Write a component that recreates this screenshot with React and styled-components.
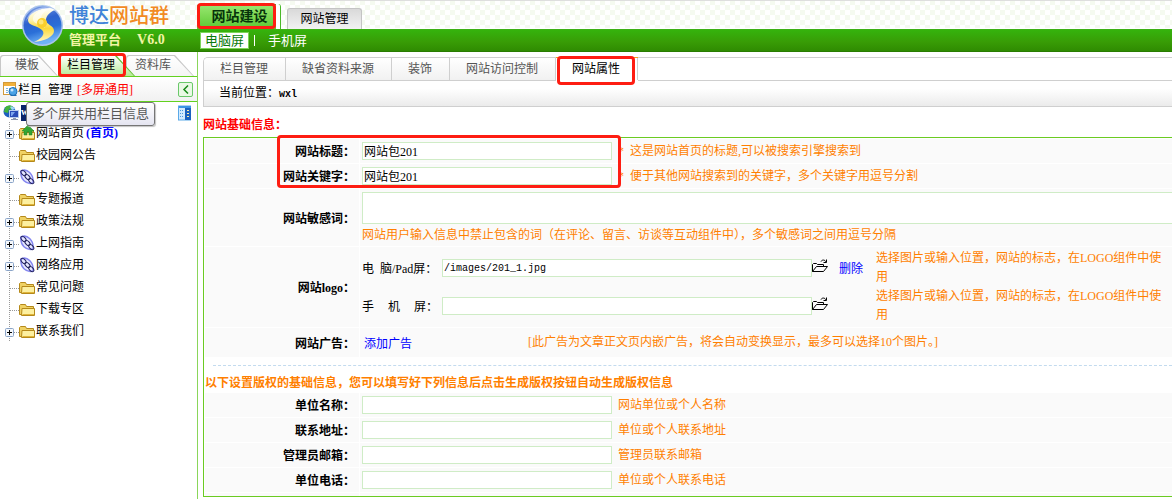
import React, { useState } from "react";
import styled, { createGlobalStyle, css } from "styled-components";

const GlobalStyle = createGlobalStyle`
  * {
    box-sizing: border-box;
  }
  body {
    margin: 0;
    background: #fff;
    overflow: hidden;
  }
  body, input, textarea, button {
    font-family: "Liberation Serif", "Noto Sans CJK SC", serif;
    font-size: 12px;
    color: #000;
  }
  a {
    text-decoration: none;
    color: inherit;
  }
`;

const Page = styled.div`
  display: flex;
  flex-direction: column;
  min-height: 100vh;
`;

// red frame drawn round a highlighted part
const Mark = styled.span`
  position: absolute;
  inset: ${(p) => p.$inset};
  width: ${(p) => p.$width || "auto"};
  border: 3px solid #fe1d12;
  border-radius: 4px;
  pointer-events: none;
  z-index: 3;
`;

/* ---------- header ---------- */
const Header = styled.header`
  display: flex;
  height: 52px;
  background: linear-gradient(#fff 0 1px, #3db014 1px 2px, #35b30d 2px, #389c06 14px, #2f8b01 23px, #236d00 24px) 0 28px / 100% 24px no-repeat,
    linear-gradient(#dedede, #dedede) 0 0 / 100% 1px no-repeat,
    repeating-conic-gradient(#fff 0 25%, #f5faf0 0 50%) 0 0 / 10px 10px;
`;
const Brand = styled.div`
  display: flex;
  width: 197px;
  flex: none;
  padding: 4px 0 0 21px;
  gap: 5px;
`;
const BrandText = styled.div`
  display: flex;
  flex-direction: column;
`;
const BrandName = styled.div`
  font-size: 20px;
  line-height: 24px;
  font-weight: 500;
  color: #3f83d8;
  white-space: nowrap;
  span {
    color: #f28a23;
  }
`;
const BrandSub = styled.div`
  display: flex;
  gap: 16px;
  font-size: 13px;
  line-height: 24px;
  color: #f2f5a4;
  font-weight: bold;
  b {
    font-size: 14px;
  }
`;
const HeaderMain = styled.div`
  flex: 1;
`;
const TopTabs = styled.nav`
  display: flex;
  align-items: flex-end;
  gap: 7px;
  height: 29px;
`;
const TopTab = styled.a`
  position: relative;
  text-align: center;
  border-radius: 3px 3px 0 0;
  ${(p) =>
    p.$active
      ? css`
          width: 83px;
          height: 25px;
          line-height: 25px;
          padding-left: 6px;
          font-size: 14px;
          font-weight: bold;
          color: #06330a;
          background: linear-gradient(#9be873, #5cc832);
          border-right: 4px solid #fff;
          box-shadow: 1px 0 0 #4ab828, inset 0 1px 0 #4ab828;
        `
      : css`
          width: 75px;
          height: 21px;
          line-height: 20px;
          background: linear-gradient(#d9d9d9, #f2f2f2);
          border: 1px solid #c4c4c4;
          border-bottom: 0;
        `}
`;
const ScreenNav = styled.nav`
  display: flex;
  align-items: center;
  height: 23px;
  padding-left: 3px;
  font-size: 13px;
  color: #fff;
`;
const ScreenLink = styled.a`
  height: 17px;
  line-height: 15px;
  padding: 0 4px;
  border: 1px solid ${(p) => (p.$active ? "#7cd45a" : "transparent")};
  background: ${(p) => (p.$active ? "#fff" : "none")};
  color: ${(p) => (p.$active ? "#0b7a0b" : "#fff")};
`;
const Divider = styled.span`
  width: 1px;
  height: 11px;
  margin: 0 8px 0 5px;
  background: #fff;
`;

/* ---------- sidebar ---------- */
const Body = styled.div`
  display: flex;
  flex: 1;
`;
const Sidebar = styled.aside`
  flex: none;
  width: 198px;
  padding-top: 3px;
  border-right: 1px solid #8ad65a;
`;
const SideTabs = styled.div`
  display: flex;
  height: 21px;
`;
const SideTab = styled.button`
  position: relative;
  height: 21px;
  width: ${(p) => p.$width};
  margin-left: ${(p) => p.$overlap || "0"};
  padding: 0 ${(p) => p.$right} 0 0;
  border: 0;
  background: none;
  line-height: 21px;
  text-align: right;
  color: ${(p) => (p.$active ? "#000" : "#555")};
  z-index: ${(p) => (p.$active ? 2 : 1)};
  &::before,
  &::after {
    content: "";
    position: absolute;
    inset: 0;
    z-index: -1;
    border-radius: 3px 0 0 0;
    background: ${(p) => (p.$active ? "#63bd35" : "#c8c8c8")};
    clip-path: polygon(0 0, calc(100% - 19px) 0, 100% 100%, 0 100%);
  }
  &::after {
    inset: 1px 1px 0 1px;
    background: ${(p) => (p.$active ? "linear-gradient(#fff, #b5ea95)" : "linear-gradient(#fff, #f4f4f4)")};
  }
`;
const SideHead = styled.div`
  display: flex;
  align-items: center;
  height: 26px;
  padding: 0 4px 0 3px;
  border-top: 1px solid #62d120;
  border-bottom: 1px solid #62d120;
  background: linear-gradient(#fff, #f1f1f1);
  em {
    margin-left: 5px;
    font-style: normal;
    color: #f00;
  }
`;
const CollapseButton = styled.button`
  display: flex;
  align-items: center;
  justify-content: center;
  width: 15px;
  height: 15px;
  margin-left: auto;
  padding: 0;
  border: 1px solid #6ac86a;
  border-radius: 2px;
  background: #e9f9e4;
`;
const Root = styled.div`
  position: relative;
  display: flex;
  align-items: center;
  height: 20px;
  padding: 2px 5px 0 3px;
`;
const RootName = styled.span`
  width: 6px;
  height: 16px;
  margin-left: 1px;
  overflow: hidden;
  background: #0a246a;
  color: #fff;
  font-size: 10px;
  font-weight: bold;
  line-height: 14px;
`;
const RootTool = styled.span`
  margin-left: auto;
  display: flex;
`;
const Tooltip = styled.div`
  position: absolute;
  left: 26px;
  top: 0;
  height: 24px;
  padding: 0 5px;
  border: 1px solid #767676;
  border-radius: 3px;
  background: linear-gradient(#fff, #e5e5f1);
  box-shadow: 1px 1px 1px #c4c4c4;
  font-size: 13px;
  line-height: 22px;
  color: #575757;
  white-space: nowrap;
  z-index: 4;
`;
const Tree = styled.ul`
  margin: 0;
  padding: 0 0 0 4px;
  list-style: none;
`;
const TreeItem = styled.li`
  display: flex;
  align-items: center;
  height: 22px;
  line-height: 20px;
  svg {
    flex: none;
  }
  b {
    margin-left: 2px;
    color: #00f;
  }
`;

/* ---------- main ---------- */
const Main = styled.main`
  flex: 1;
  min-width: 0;
  padding: 5px 0 0 5px;
`;
const Tabs = styled.nav`
  display: flex;
  height: 24px;
  border: 1px solid #cfcfcf;
  border-right: 0;
  border-radius: 5px 0 0 0;
`;
const Tab = styled.a`
  position: relative;
  height: 22px;
  line-height: 22px;
  padding: 0 17px 0 16px;
  border-right: 1px solid #cfcfcf;
  color: ${(p) => (p.$active ? "#000" : "#555")};
  background: ${(p) => (p.$active ? "#fff" : "linear-gradient(#fff, #f1f1f1)")};
  box-shadow: ${(p) => (p.$active ? "0 -1px 0 #f5a21c, 0 1px 0 #fff" : "none")};
  &:first-child {
    border-radius: 4px 0 0 0;
  }
`;
const Crumb = styled.div`
  height: 26px;
  padding-left: 15px;
  border: solid #cfcfcf;
  border-width: 0 0 1px 1px;
  background: linear-gradient(#fff 30%, #ebebeb);
  line-height: 24px;
`;
const Mono = styled.b`
  font-family: "Liberation Mono", monospace;
  font-size: 10px;
`;
const Title = styled.h2`
  margin: 0;
  padding: 10px 0 3px;
  font-size: 12px;
  line-height: 17px;
  color: #f00;
`;
const Panel = styled.form`
  display: flex;
  flex-direction: column;
  gap: 1px;
  border: solid #6bcb22;
  border-width: 1px 0 1px 1px;
  padding: 1px 0 0 1px;
`;
const MarkedRows = styled.div`
  position: relative;
  display: flex;
  flex-direction: column;
  gap: 1px;
`;
const Row = styled.div`
  display: grid;
  grid-template-columns: 154px minmax(0, 1fr);
  gap: 1px;
  min-height: ${(p) => p.$height || "24px"};
  > * {
    background: #fafafa;
  }
`;
const Label = styled.label`
  display: flex;
  align-items: center;
  justify-content: flex-end;
  padding-right: 4px;
  font-weight: bold;
`;
const Field = styled.div`
  display: flex;
  align-items: center;
  padding-left: 2px;
  gap: 6px;
`;
const StackField = styled(Field)`
  flex-direction: column;
  align-items: stretch;
  justify-content: flex-end;
  gap: 0;
`;
const Input = styled.input`
  flex: none;
  width: 250px;
  height: 18px;
  padding: 0 1px;
  border: 1px solid #cfecc6;
  background: #fff;
  outline: none;
`;
const PathInput = styled(Input)`
  width: 370px;
  font-family: "Liberation Mono", monospace;
  font-size: 10px;
`;
const TextArea = styled.textarea`
  display: block;
  width: 100%;
  height: 32px;
  border: 1px solid #cfecc6;
  border-right: 0;
  resize: none;
  outline: none;
`;
const Hint = styled.span`
  color: #ff7f00;
  line-height: ${(p) => (p.$tall ? "22px" : "19px")};
`;
const LogoLine = styled.div`
  display: flex;
  align-items: center;
  height: 38px;
  &:last-child {
    margin-bottom: 2px;
  }
`;
const LogoLabel = styled.label`
  display: flex;
  gap: ${(p) => p.$gap};
  width: 80px;
  flex: none;
`;
const IconButton = styled.button`
  display: flex;
  flex: none;
  width: 17px;
  padding: 0 0 4px;
  border: 0;
  background: none;
`;
const LogoAction = styled.a`
  flex: none;
  width: 47px;
  padding-left: 10px;
  color: #00f;
`;
const LogoHint = styled(Hint)`
  flex: 1;
  max-width: 290px;
`;
const AddLink = styled.a`
  width: 160px;
  padding-left: 2px;
  color: #00f;
`;
const Dashes = styled.hr`
  width: calc(100% - 8px);
  margin: 7px 0 8px 8px;
  border: 0;
  border-top: 1px dashed #c3dbef;
`;
const Note = styled.p`
  margin: 0;
  line-height: 17px;
  font-weight: bold;
  color: #ff7f00;
`;

/* ---------- icons ---------- */
const LogoIcon = () => (
  <svg width="43" height="43" viewBox="0 0 43 43" aria-hidden="true">
    <defs>
      <linearGradient id="ball" x1="0" y1="0" x2=".3" y2="1">
        <stop offset="0" stopColor="#8aa9ea" />
        <stop offset=".45" stopColor="#2e62cf" />
        <stop offset=".7" stopColor="#2a6fd8" />
        <stop offset="1" stopColor="#6fb2f5" />
      </linearGradient>
      <linearGradient id="swoosh" x1="0" y1="0" x2="0" y2="1">
        <stop offset="0" stopColor="#fff" />
        <stop offset=".35" stopColor="#fdf3b0" />
        <stop offset=".6" stopColor="#fbd93a" />
        <stop offset="1" stopColor="#fff6c4" />
      </linearGradient>
    </defs>
    <circle cx="21.500" cy="21.500" r="20.500" fill="#a9c3ec" />
    <circle cx="21.500" cy="21.500" r="19" fill="url(#ball)" />
    <path d="M29 4C17 4 7 10 7 16c0 6 9 5 14 10 4 4-1 9-8 12 10-1 20-5 20-11 0-6-8-6-8-11 0-4 4-8 9-10-2-1-3-2-5-2z" fill="url(#swoosh)" />
    <path d="M28 5C17 6 11 11 12 16c1 4 8 4 12 8-1-3-4-6-4-9 0-4 3-8 8-10z" fill="#fff" opacity=".6" />
    <circle cx="21" cy="19" r="5" fill="#f9cf2c" />
    <circle cx="20" cy="18" r="2.500" fill="#fde678" />
    <path d="M5 17C8 6 20 1 30 4 18 4 10 9 5 17z" fill="#dbe6fb" opacity=".6" />
  </svg>
);
const ColumnsIcon = () => (
  <svg width="15" height="16" viewBox="0 0 15 16" aria-hidden="true">
    <rect x=".5" y="1.500" width="12" height="12" fill="#fff" stroke="#d29a3a" />
    <path d="M1 2h11v3H1z" fill="#f2b13b" />
    <path d="M3 7.500h7M3 9.500h6M3 11.500h4" stroke="#7db4d8" strokeDasharray="2 1" />
    <circle cx="10" cy="10.500" r="4" fill="#4ba3e6" stroke="#1f6fb5" />
    <path d="M7.500 14.500h6" stroke="#1f6fb5" />
    <circle cx="9" cy="9" r="1.500" fill="#c7e8ff" />
  </svg>
);
const GlobeIcon = () => (
  <svg width="17" height="16" viewBox="0 0 17 16" aria-hidden="true">
    <circle cx="6.500" cy="6.500" r="6" fill="#1f5fc0" />
    <path d="M2 3c2-3 6-3 8-1L8 5 6 4 5 8 1 7zM6 9l3 1-2 2z" fill="#43b53c" />
    <path d="M7 2c2-1 4 0 5 2L9 5z" fill="#9fd8f5" />
    <rect x="6.500" y="5.500" width="9" height="7" fill="#2a4db8" stroke="#b9cdee" />
    <path d="M8 7h4l-3 4H8z" fill="#7da6ee" />
    <path d="M10 13h3v1h2v1H8v-1h2z" fill="#8b97ad" />
  </svg>
);
const ListIcon = () => (
  <svg width="14" height="16" viewBox="0 0 14 16" aria-hidden="true">
    <rect x=".5" y="1" width="12" height="14" fill="#d3ebff" stroke="#5aa9e8" />
    <path d="M7 1h6v14H7z" fill="#1b62c0" />
    <path d="M1 1h12v2H1z" fill="#3d93e6" />
    <path d="M2 5.500h4M2 8.500h4M2 11.500h4" stroke="#4a9be0" strokeDasharray="1 1" />
    <path d="M9 5.500h2M9 8.500h2M9 11.500h2" stroke="#ffe9a0" />
  </svg>
);
const Branch = ({ plus }) => (
  <svg width="15" height="22" viewBox="0 0 15 22" aria-hidden="true">
    <path d="M5.500 0v22M6 12.500h9" stroke="#999" strokeDasharray="1 1" />
    {plus && (
      <>
        <rect x="1.500" y="8.500" width="8" height="8" rx="1" fill="#f4f7fb" stroke="#8aa4c8" />
        <path d="M3 12.500h5M5.500 10v5" stroke="#000" />
      </>
    )}
  </svg>
);
const FolderIcon = ({ home }) => (
  <svg width="17" height="16" viewBox="0 0 17 16" aria-hidden="true">
    <path d="M.5 13.500v-9l1-1h5l1 2h7v8.500z" fill="#f0d264" stroke="#b5891a" />
    <path d="M2.500 14.500l.5-7h12.500v7z" fill="#fdf0a0" stroke="#b5891a" />
    <path d="M3.500 13.500h11.500" stroke="#e0b53a" />
    {home && <path d="M9 0l6 6h-2v4h-3V7H8v3H5V6H3z" fill="#35a535" stroke="#1d7f22" strokeWidth=".5" />}
  </svg>
);
const ChainIcon = () => (
  <svg width="17" height="16" viewBox="0 0 17 16" aria-hidden="true">
    <path d="M2 2c6-3 13 3 12 12C7 16 1 10 2 2z" fill="#e6e7ff" stroke="#8486f0" strokeWidth="1.500" />
    <g fill="none" stroke="#22225c">
      <ellipse cx="4.500" cy="4" rx="3.200" ry="1.800" transform="rotate(45 4.500 4)" />
      <ellipse cx="8.500" cy="8" rx="3.200" ry="1.800" transform="rotate(45 8.500 8)" />
      <ellipse cx="12.200" cy="12" rx="3.200" ry="1.800" transform="rotate(45 12.200 12)" />
    </g>
  </svg>
);
const OpenIcon = () => (
  <svg width="16" height="14" viewBox="0 0 16 14" fill="none" stroke="#000" aria-hidden="true">
    <path d="M.5 12.500v-7l1-1h3l1 1h6v2M.5 12.500l4-5h11l-4 5zM9 2.500c1-2 4-2 5 .5M14.500.5v3h-3" />
  </svg>
);

const treeItems = [
  { name: "网站首页", icon: "home", plus: true, extra: "(首页)" },
  { name: "校园网公告", icon: "folder" },
  { name: "中心概况", icon: "chain", plus: true },
  { name: "专题报道", icon: "folder" },
  { name: "政策法规", icon: "folder", plus: true },
  { name: "上网指南", icon: "chain", plus: true },
  { name: "网络应用", icon: "chain", plus: true },
  { name: "常见问题", icon: "folder" },
  { name: "下载专区", icon: "folder" },
  { name: "联系我们", icon: "folder", plus: true },
];
const tabs = ["栏目管理", "缺省资料来源", "装饰", "网站访问控制", "网站属性"];
const copyrightFields = [
  { id: "company", label: "单位名称：", hint: "网站单位或个人名称" },
  { id: "address", label: "联系地址：", hint: "单位或个人联系地址" },
  { id: "email", label: "管理员邮箱：", hint: "管理员联系邮箱" },
  { id: "phone", label: "单位电话：", hint: "单位或个人联系电话" },
];
const logoHint = "选择图片或输入位置，网站的标志，在LOGO组件中使用";

function SiteHeader() {
  return (
    <Header>
      <Brand>
        <LogoIcon />
        <BrandText>
          <BrandName>
            博达<span>网站群</span>
          </BrandName>
          <BrandSub>
            管理平台 <b>V6.0</b>
          </BrandSub>
        </BrandText>
      </Brand>
      <HeaderMain>
        <TopTabs>
          <TopTab href="#" $active>
            网站建设
            <Mark $inset="-1px 0 0 0" />
          </TopTab>
          <TopTab href="#">网站管理</TopTab>
        </TopTabs>
        <ScreenNav>
          <ScreenLink href="#" $active>电脑屏</ScreenLink>
          <Divider />
          <ScreenLink href="#">手机屏</ScreenLink>
        </ScreenNav>
      </HeaderMain>
    </Header>
  );
}

function SiteTree() {
  return (
    <Sidebar>
      <SideTabs>
        <SideTab $width="58px" $right="19px">模板</SideTab>
        <SideTab $width="77px" $right="20px" $active>
          栏目管理
          <Mark $inset="-2px 9px -1px 0" />
        </SideTab>
        <SideTab $width="68px" $right="23px" $overlap="-9px">资料库</SideTab>
      </SideTabs>
      <SideHead>
        <ColumnsIcon />
        栏目&ensp;管理
        <em>[多屏通用]</em>
        <CollapseButton aria-label="收起">
          <svg width="7" height="9" viewBox="0 0 7 9" fill="none" stroke="#178a17" strokeWidth="1.500">
            <path d="M6 .5l-4 4 4 4" />
          </svg>
        </CollapseButton>
      </SideHead>
      <Root>
        <GlobeIcon />
        <RootName>w</RootName>
        <RootTool>
          <ListIcon />
        </RootTool>
        <Tooltip role="tooltip">多个屏共用栏目信息</Tooltip>
      </Root>
      <Tree>
        {treeItems.map((item) => (
          <TreeItem key={item.name}>
            <Branch plus={item.plus} />
            {item.icon === "chain" ? <ChainIcon /> : <FolderIcon home={item.icon === "home"} />}
            {item.name}
            {item.extra && <b>{item.extra}</b>}
          </TreeItem>
        ))}
      </Tree>
    </Sidebar>
  );
}

function SiteForm() {
  const [values, setValues] = useState({
    title: "网站包201",
    keyword: "网站包201",
    logo: "/images/201_1.jpg",
  });
  const bind = (name) => ({
    id: name,
    value: values[name] || "",
    onChange: (e) => setValues({ ...values, [name]: e.target.value }),
  });

  return (
    <Panel>
      <MarkedRows>
        <Row>
          <Label htmlFor="title">网站标题：</Label>
          <Field>
            <Input {...bind("title")} />
            <Hint>*&nbsp; 这是网站首页的标题,可以被搜索引擎搜索到</Hint>
          </Field>
        </Row>
        <Row>
          <Label htmlFor="keyword">网站关键字：</Label>
          <Field>
            <Input {...bind("keyword")} />
            <Hint>*&nbsp; 便于其他网站搜索到的关键字，多个关键字用逗号分割</Hint>
          </Field>
        </Row>
        <Mark $inset="-4px auto 0 72px" $width="344px" />
      </MarkedRows>
      <Row $height="57px">
        <Label htmlFor="words">网站敏感词：</Label>
        <StackField>
          <TextArea {...bind("words")} />
          <Hint $tall>网站用户输入信息中禁止包含的词（在评论、留言、访谈等互动组件中），多个敏感词之间用逗号分隔</Hint>
        </StackField>
      </Row>
      <Row $height="80px">
        <Label as="span">网站logo：</Label>
        <StackField>
          <LogoLine>
            <LogoLabel htmlFor="logo" $gap="6px">
              <span>电</span>
              <span>脑/Pad屏：</span>
            </LogoLabel>
            <PathInput {...bind("logo")} />
            <IconButton type="button" aria-label="选择图片"><OpenIcon /></IconButton>
            <LogoAction href="#">删除</LogoAction>
            <LogoHint>{logoHint}</LogoHint>
          </LogoLine>
          <LogoLine>
            <LogoLabel htmlFor="mobileLogo" $gap="14px">
              <span>手</span>
              <span>机</span>
              <span>屏：</span>
            </LogoLabel>
            <PathInput {...bind("mobileLogo")} />
            <IconButton type="button" aria-label="选择图片"><OpenIcon /></IconButton>
            <LogoAction as="span" />
            <LogoHint>{logoHint}</LogoHint>
          </LogoLine>
        </StackField>
      </Row>
      <Row $height="29px">
        <Label as="span">网站广告：</Label>
        <Field>
          <AddLink href="#">添加广告</AddLink>
          <Hint>[此广告为文章正文页内嵌广告，将会自动变换显示，最多可以选择10个图片。]</Hint>
        </Field>
      </Row>
      <Dashes />
      <Note>以下设置版权的基础信息，您可以填写好下列信息后点击生成版权按钮自动生成版权信息</Note>
      {copyrightFields.map((field) => (
        <Row key={field.id}>
          <Label htmlFor={field.id}>{field.label}</Label>
          <Field>
            <Input {...bind(field.id)} />
            <Hint>{field.hint}</Hint>
          </Field>
        </Row>
      ))}
      <Row $height="3px">
        <span />
        <span />
      </Row>
    </Panel>
  );
}

function App() {
  return (
    <>
      <GlobalStyle />
      <Page lang="zh-CN">
        <SiteHeader />
        <Body>
          <SiteTree />
          <Main>
            <Tabs>
              {tabs.map((tab) => (
                <Tab key={tab} href="#" $active={tab === "网站属性"}>
                  {tab}
                  {tab === "网站属性" && <Mark $inset="-2px 2px -5px 1px" />}
                </Tab>
              ))}
            </Tabs>
            <Crumb>
              当前位置：<Mono>wxl</Mono>
            </Crumb>
            <Title>网站基础信息：</Title>
            <SiteForm />
          </Main>
        </Body>
      </Page>
    </>
  );
}

export default App;
